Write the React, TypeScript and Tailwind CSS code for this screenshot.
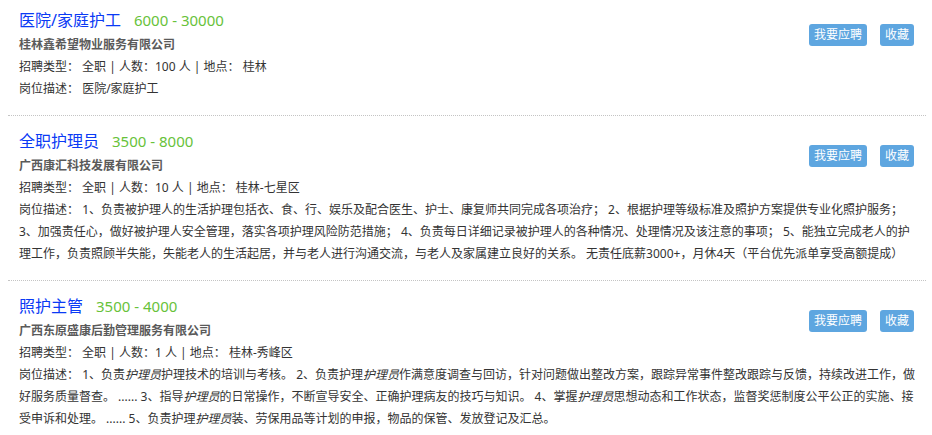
import React from "react";

type Job = {
  title: string;
  salary: string;
  company: string;
  count: string;
  place: string;
  desc: React.ReactNode;
};

const I = ({ children }: { children: React.ReactNode }) => <i>{children}</i>;

const jobs: Job[] = [
  {
    title: "医院/家庭护工",
    salary: "6000 - 30000",
    company: "桂林鑫希望物业服务有限公司",
    count: "100",
    place: "桂林",
    desc: "医院/家庭护工",
  },
  {
    title: "全职护理员",
    salary: "3500 - 8000",
    company: "广西康汇科技发展有限公司",
    count: "10",
    place: "桂林-七星区",
    desc: "1、负责被护理人的生活护理包括衣、食、行、娱乐及配合医生、护士、康复师共同完成各项治疗； 2、根据护理等级标准及照护方案提供专业化照护服务； 3、加强责任心，做好被护理人安全管理，落实各项护理风险防范措施； 4、负责每日详细记录被护理人的各种情况、处理情况及该注意的事项； 5、能独立完成老人的护理工作，负责照顾半失能，失能老人的生活起居，并与老人进行沟通交流，与老人及家属建立良好的关系。 无责任底薪3000+，月休4天（平台优先派单享受高额提成）",
  },
  {
    title: "照护主管",
    salary: "3500 - 4000",
    company: "广西东原盛康后勤管理服务有限公司",
    count: "1",
    place: "桂林-秀峰区",
    desc: (
      <>
        1、负责<I>护理员</I>护理技术的培训与考核。 2、负责护理<I>护理员</I>作满意度调查与回访，针对问题做出整改方案，跟踪异常事件整改跟踪与反馈，持续改进工作，做好服务质量督查。 ...... 3、指导<I>护理员</I>的日常操作，不断宣导安全、正确护理病友的技巧与知识。 4、掌握<I>护理员</I>思想动态和工作状态，监督奖惩制度公平公正的实施、接受申诉和处理。 ...... 5、负责护理<I>护理员</I>装、劳保用品等计划的申报，物品的保管、发放登记及汇总。
      </>
    ),
  },
];

export default function App() {
  return (
    <div
      className="w-[932px] h-[435px] overflow-hidden bg-white text-[#333] text-[12px]"
      style={{ fontFamily: '"Noto Sans", "Noto Sans CJK SC", sans-serif' }}
    >
      <div className="ml-[8px] mr-[6px]">
        {jobs.map((j, i) => (
          <div
            key={j.title}
            className={
              i === 0
                ? "flow-root pl-[11px] pr-[9px] pt-[8px] pb-[15px] border-b border-dotted border-[#c4c4c4]"
                : "flow-root pl-[11px] pr-[9px] pt-[13px] pb-[15px] border-b border-dotted border-[#c4c4c4]"
            }
          >
            <div className="float-right mt-[16px] mr-[3px] flex gap-[13px]">
              <span className="inline-block h-[22px] leading-[22px] px-[5px] rounded-[3px] bg-[#5ea6e0] text-white text-[12px]">
                我要应聘
              </span>
              <span className="inline-block h-[22px] leading-[22px] px-[5px] rounded-[3px] bg-[#5ea6e0] text-white text-[12px]">
                收藏
              </span>
            </div>
            <div className="leading-[25px] whitespace-nowrap">
              <span className="text-[16px] text-[#0a3af5]">{j.title}</span>
              <span className="ml-[13px] text-[15px] text-[#67c23a]">{j.salary}</span>
            </div>
            <div className="leading-[22px] font-bold text-[#5a5a5a]">{j.company}</div>
            <div className="leading-[22px]">
              招聘类型： 全职 | 人数：{j.count} 人 | 地点： {j.place}
            </div>
            <div className="leading-[22px]">岗位描述： {j.desc}</div>
          </div>
        ))}
      </div>
    </div>
  );
}
